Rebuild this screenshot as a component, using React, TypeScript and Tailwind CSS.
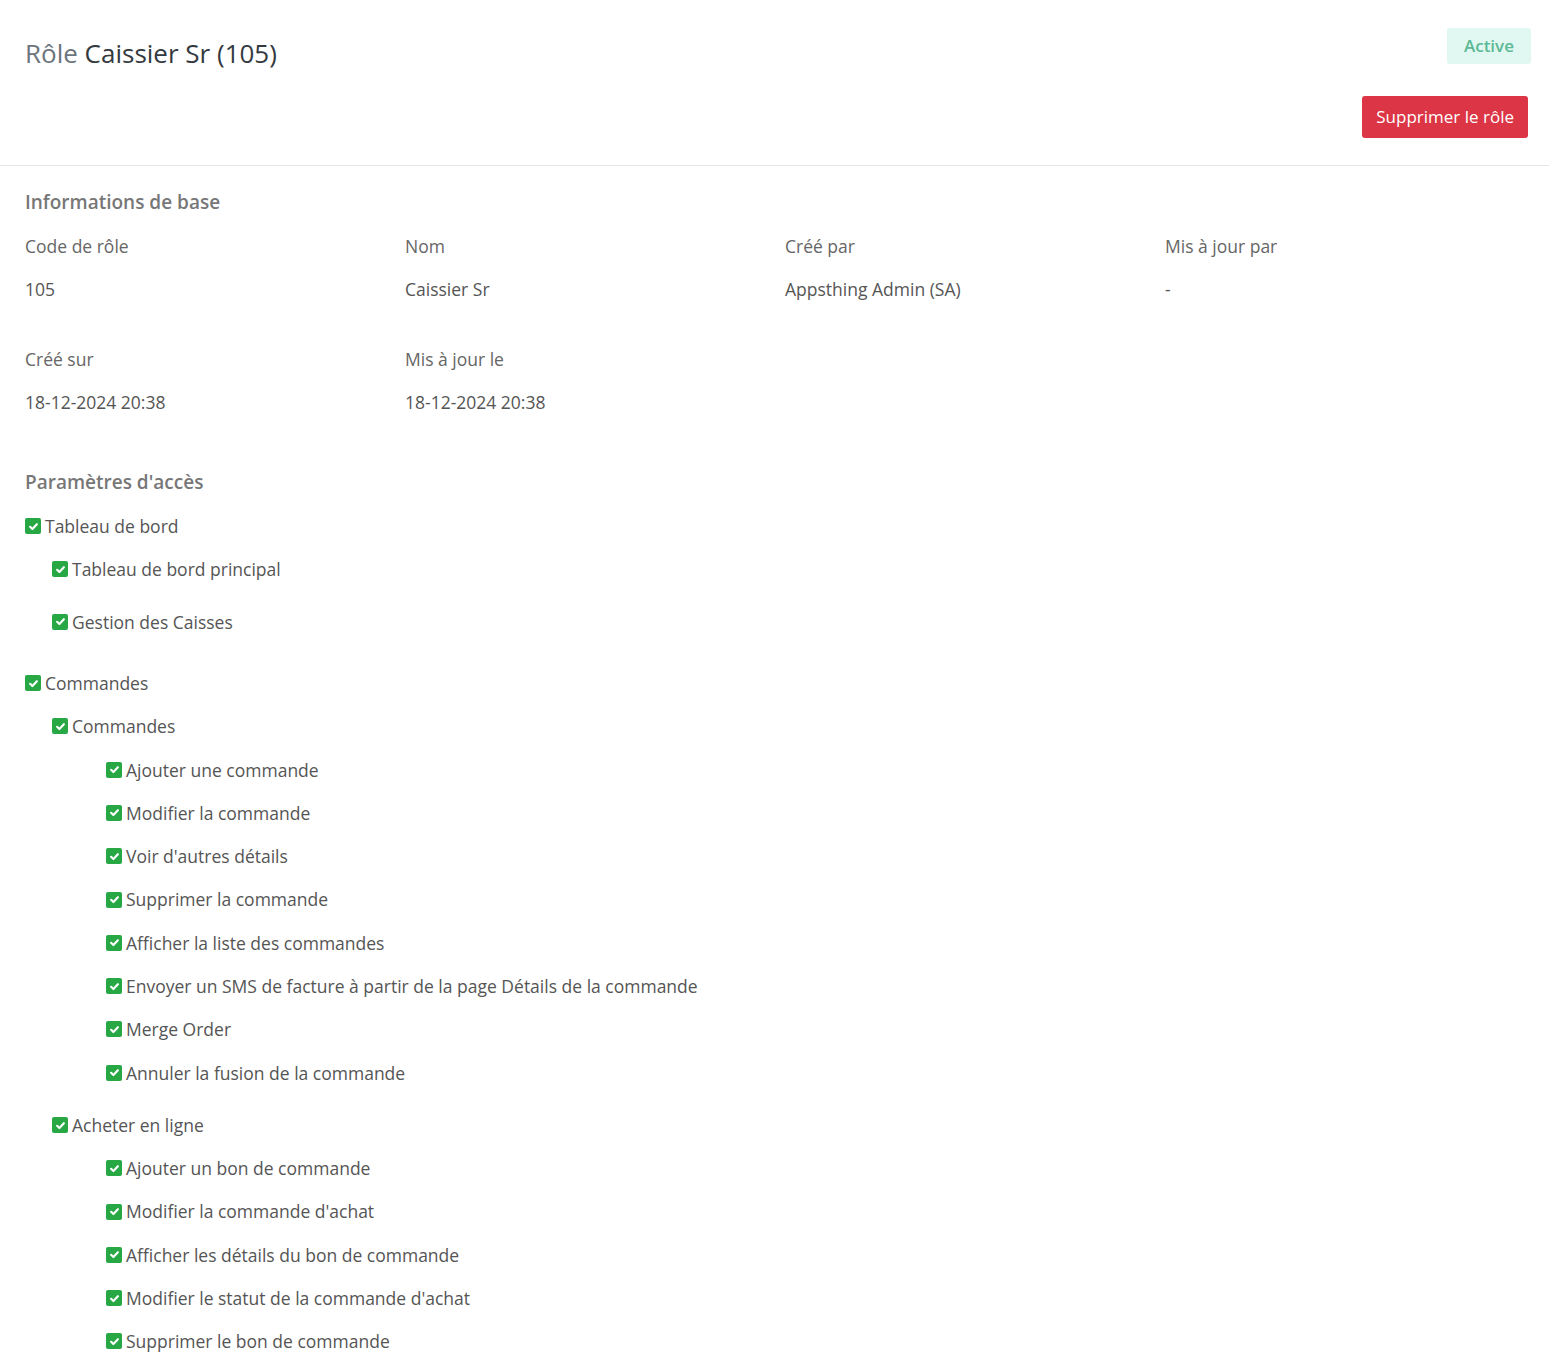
import React from 'react';

type Perm = { label: string; children?: Perm[] };

const permissions: Perm[] = [
  {
    label: 'Tableau de bord',
    children: [{ label: 'Tableau de bord principal' }, { label: 'Gestion des Caisses' }],
  },
  {
    label: 'Commandes',
    children: [
      {
        label: 'Commandes',
        children: [
          { label: 'Ajouter une commande' },
          { label: 'Modifier la commande' },
          { label: "Voir d'autres détails" },
          { label: 'Supprimer la commande' },
          { label: 'Afficher la liste des commandes' },
          { label: 'Envoyer un SMS de facture à partir de la page Détails de la commande' },
          { label: 'Merge Order' },
          { label: 'Annuler la fusion de la commande' },
        ],
      },
      {
        label: 'Acheter en ligne',
        children: [
          { label: 'Ajouter un bon de commande' },
          { label: "Modifier la commande d'achat" },
          { label: 'Afficher les détails du bon de commande' },
          { label: "Modifier le statut de la commande d'achat" },
          { label: 'Supprimer le bon de commande' },
        ],
      },
    ],
  },
];

const info = [
  [
    { label: 'Code de rôle', value: '105' },
    { label: 'Nom', value: 'Caissier Sr' },
    { label: 'Créé par', value: 'Appsthing Admin (SA)' },
    { label: 'Mis à jour par', value: '-' },
  ],
  [
    { label: 'Créé sur', value: '18-12-2024 20:38' },
    { label: 'Mis à jour le', value: '18-12-2024 20:38' },
  ],
];

const CheckBox = () => (
  <span className="inline-flex items-center justify-center w-[16px] h-[16px] rounded-[2px] bg-[#28a745] shrink-0 mr-[4px]">
    <svg width="11" height="11" viewBox="0 0 12 12" fill="none">
      <path d="M2.3 6.3l2.5 2.5 4.9-5.3" stroke="white" strokeWidth="2.3" strokeLinecap="round" strokeLinejoin="round" />
    </svg>
  </span>
);

const Row = ({ label }: { label: string }) => (
  <div className="flex items-center h-[26.3px] mb-[17px]">
    <CheckBox />
    <span>{label}</span>
  </div>
);

export default function App() {
  return (
    <div className="min-h-screen bg-white text-[#555] text-[17.5px]" style={{ fontFamily: '"Open Sans", "Noto Sans", sans-serif' }}>
      <div className="flex justify-between pl-[25px] pr-[21px] pt-[28px] pb-[27px] border-b border-[#e6e6e6]">
        <h1 className="text-[26px] leading-[50px] text-[#343a40]">
          <span className="text-[#6c757d]">Rôle</span> Caissier Sr (105)
        </h1>
        <div className="flex flex-col items-end">
          <span className="px-[17px] h-[36px] leading-[36px] rounded-[3px] bg-[#e0f8f1] text-[#5cb895] font-semibold text-[17px] mr-[-3px]">
            Active
          </span>
          <button className="mt-[32px] h-[42px] px-[14px] rounded-[3px] bg-[#dc3545] text-white text-[17px]">
            Supprimer le rôle
          </button>
        </div>
      </div>

      <div className="pl-[25px] pt-[22px] flex flex-col">
        <h2 className="text-[19px] font-semibold text-[#777] leading-[28px] mb-[17px]">Informations de base</h2>
        {info.map((row, i) => (
          <div key={i} className="grid grid-cols-[380px_380px_380px_380px] mb-[44px]">
            {row.map((f) => (
              <div key={f.label}>
                <div className="text-[#666] leading-[26px] mb-[17px]">{f.label}</div>
                <div className="leading-[26px]">{f.value}</div>
              </div>
            ))}
          </div>
        ))}

        <h2 className="text-[19px] font-semibold text-[#777] leading-[28px] mt-[9px] mb-[17px]">Paramètres d'accès</h2>
        {permissions.map((p0, i) => (
          <div key={i} className="pb-[9px]">
            <Row label={p0.label} />
            {p0.children?.map((p1, j) => (
              <div key={j} className="pl-[27px] pb-[9px]">
                <Row label={p1.label} />
                {p1.children && (
                  <div className="pl-[54px]">
                    {p1.children.map((p2, k) => (
                      <Row key={k} label={p2.label} />
                    ))}
                  </div>
                )}
              </div>
            ))}
          </div>
        ))}
      </div>
    </div>
  );
}
